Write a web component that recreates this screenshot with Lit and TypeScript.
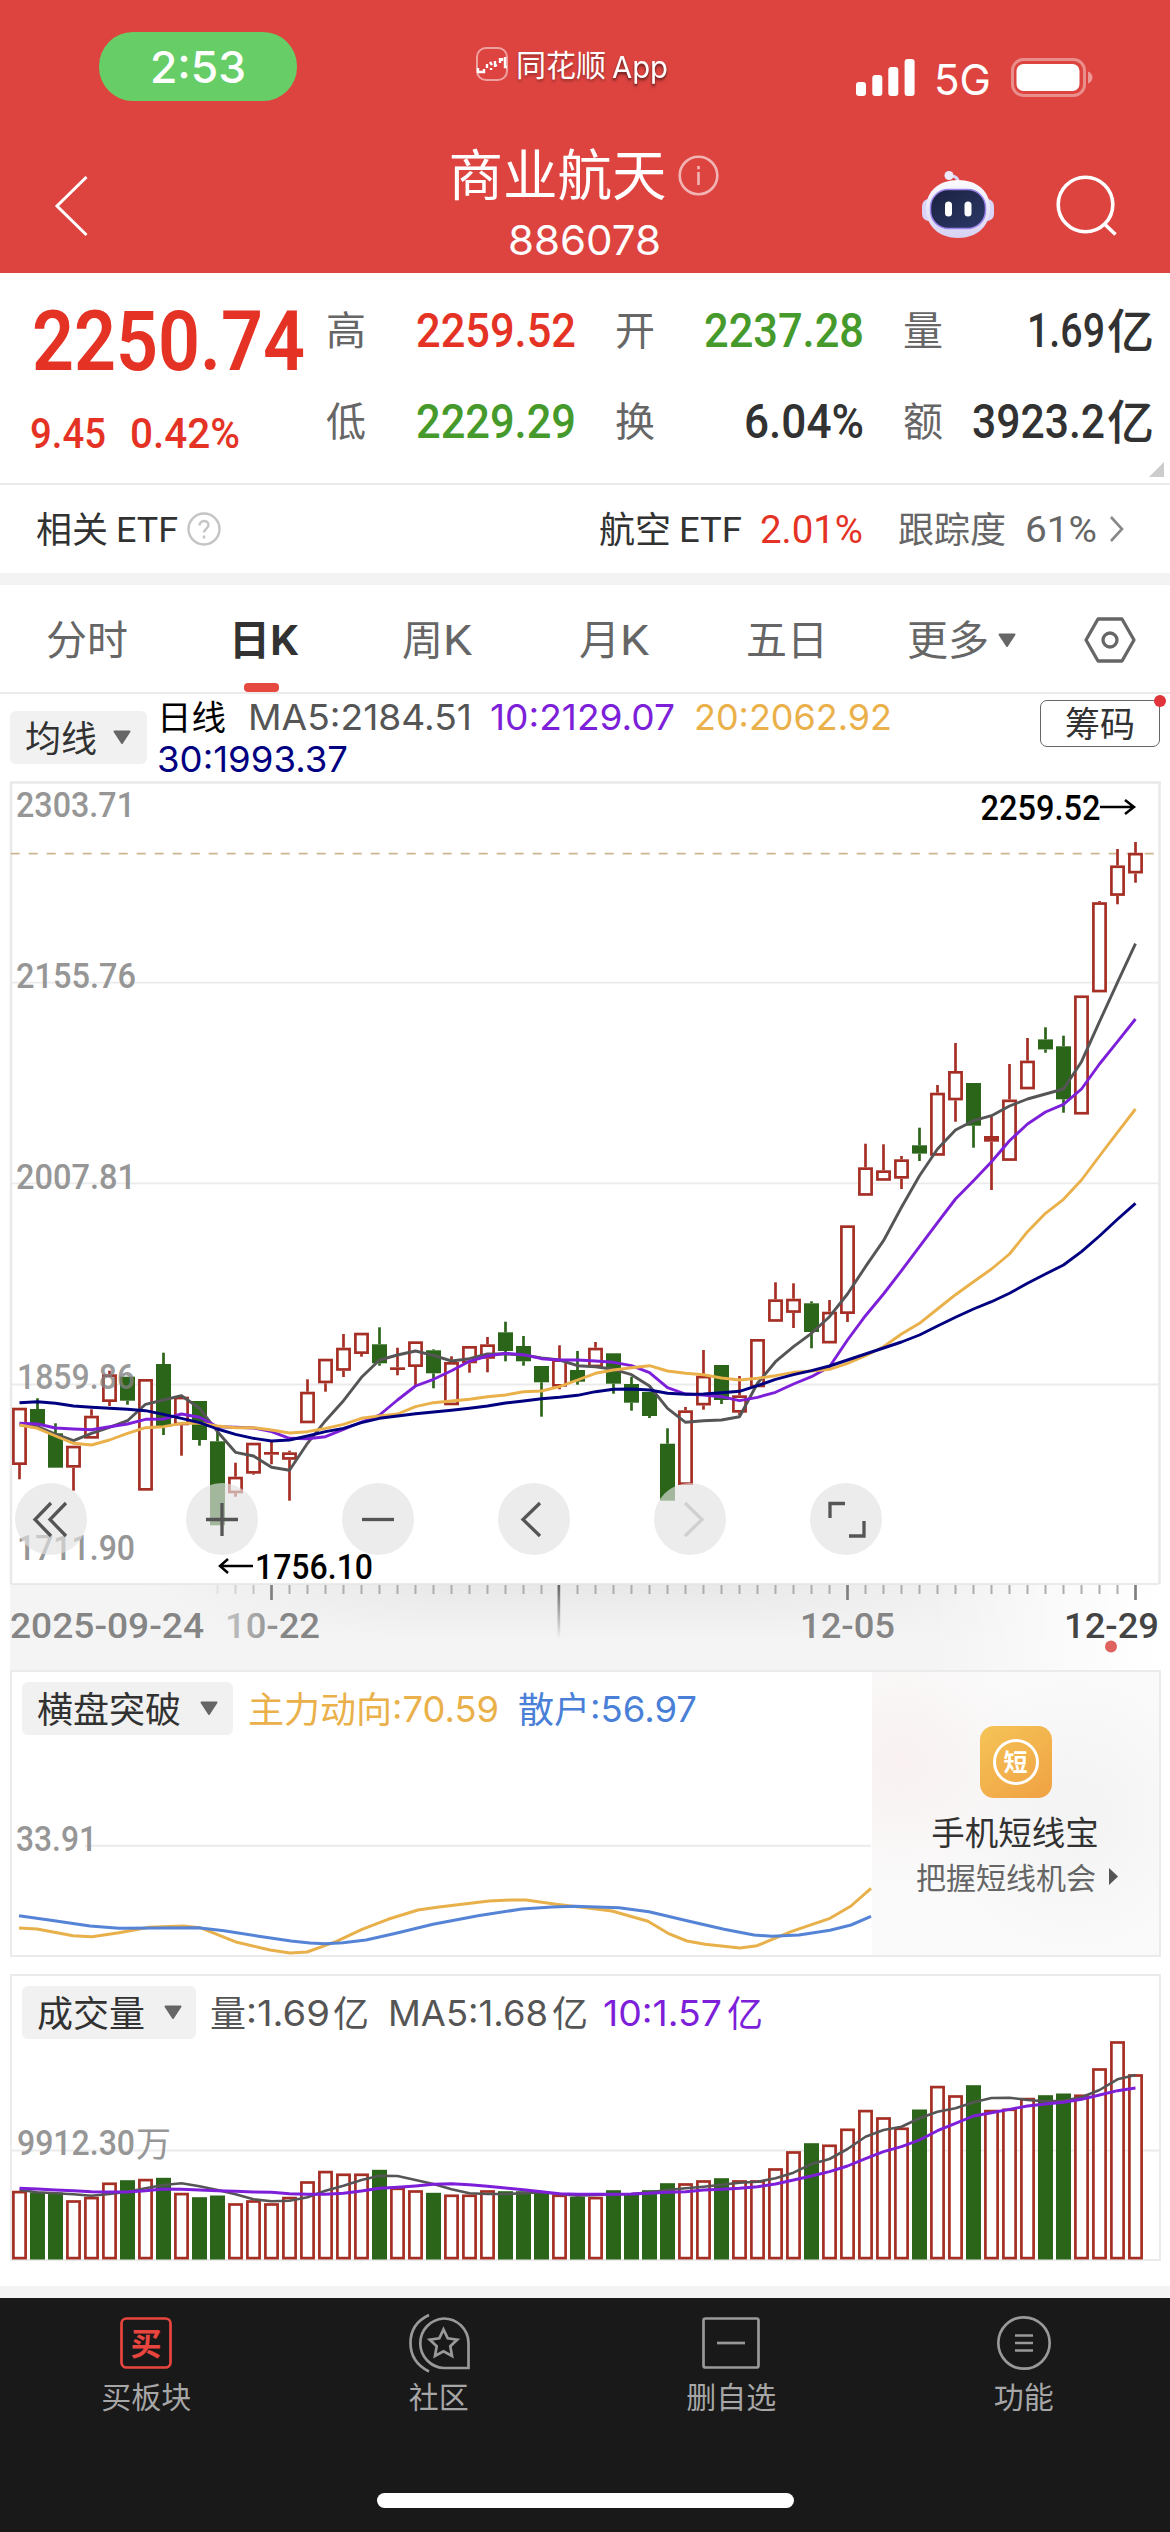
import { LitElement, html, svg, css, nothing } from "lit";
import { customElement } from "lit/decorators.js";

type Candle = [kind: "r" | "g" | "f", open: number, close: number, high?: number, low?: number];

const STEP = 18;
const FIRST = 19.5;
const cx = (i: number) => FIRST + i * STEP;

/* kind (r hollow, g filled, f filled red), body top, body bottom, wick top, wick bottom */
const CANDLES: Candle[] = [
  ["r", 627.7, 685, 627.7, 699.3], ["g", 629, 645.7, 618.3, 646.7], ["g", 653.3, 687.7, 643.3, 687.7],
  ["r", 665.7, 687.7, 665.7, 710.7], ["r", 635.7, 658.7, 629.3], ["r", 594.3, 622, 590.7, 626],
  ["g", 596.7, 620.7, 596.7, 624.7], ["r", 599, 710.7], ["g", 584, 646.7, 572.7, 655],
  ["r", 616.7, 645.3, 615, 675.7], ["g", 621, 660, 621, 665.7], ["g", 661.3, 745.3, 651.7],
  ["r", 696.7, 713.3, 682.7, 716.7], ["r", 662.7, 693.7, 662.7, 694.7], ["f", 672, 674.7, 661.7, 684.3],
  ["r", 672.3, 679.8, 670.7, 720.7], ["r", 611.7, 643.3, 599.3], ["r", 578.7, 603.3, 578.7, 611.7],
  ["r", 567.7, 590.8, 554, 597], ["r", 552.7, 574, 552.7, 576.7], ["g", 564.3, 583.3, 547.3, 585.7],
  ["f", 587.3, 590, 567.7, 595.3], ["r", 561.3, 587, 561.3, 606], ["g", 570.3, 593.3, 569.3, 608.3],
  ["r", 582, 625.3, 576.3], ["r", 566, 583.3, 566, 592.7], ["r", 564.3, 578.8, 557, 592.3],
  ["g", 552.3, 571, 541.7, 581.3], ["g", 566, 581.3, 556, 585.7], ["g", 586, 602.3, 586, 636.7],
  ["r", 579.3, 606.7, 565.3, 609.3], ["g", 590, 601.7, 571, 604.7], ["r", 567.7, 587.3, 562],
  ["g", 573.3, 603.7, 573.3, 613.7], ["g", 604, 622.7, 596.7, 630.7], ["g", 612, 636, 612, 638],
  ["g", 663.7, 720.7, 648.3], ["r", 630.3, 705, 627], ["r", 595.7, 625.5, 570, 629.7],
  ["g", 585, 620, 585, 624], ["r", 615.3, 632.7, 596, 635], ["r", 559, 607.3],
  ["r", 519.3, 541.8, 502.3], ["r", 518.7, 532.9, 503.3, 548], ["g", 523.3, 552, 521.3, 568.3],
  ["r", 531.7, 563.5, 520], ["r", 445.3, 534, 445.3, 542], ["r", 387.3, 415.8, 363.7],
  ["r", 390.3, 400.8, 364.3], ["r", 379.3, 398.7, 376, 409], ["g", 365.3, 373.6, 347.7, 381],
  ["r", 312.7, 375.8, 305], ["r", 291, 320.4, 263, 341.7], ["g", 303, 345.7, 303, 367.7],
  ["f", 356, 361.7, 336.7, 410], ["r", 319.5, 380.9, 284], ["r", 280.6, 309.4, 258],
  ["g", 259.4, 269.4, 247.3, 272.7], ["g", 266.3, 319.3, 255.7, 332.7], ["r", 215.4, 334.6],
  ["r", 122.2, 212.4, 121], ["r", 85.4, 115.9, 69, 124.3], ["r", 72.8, 93.5, 62, 102.7],
];

const MA5 = [644.3, 646.7, 654, 660.7, 653.3, 647.3, 640.7, 624.3, 620, 615.7, 628.3, 651.7, 672.3, 676, 687.3, 690.3, 663.3, 640.7, 620.7, 597.3, 580, 575, 571, 575.3, 581, 578.7, 574, 574, 575, 578, 580, 585.7, 586.7, 589.3, 594.7, 606, 628.3, 642.3, 640.7, 640, 636.7, 603.3, 581.7, 566.7, 553.3, 536.7, 514, 486.7, 460.7, 427.3, 395.7, 369, 350, 340.7, 335.7, 326, 319, 314, 309, 281.7, 241.7, 202.3, 163.7];
const MA10 = [643.3, 644, 648, 649, 649.7, 646.7, 644, 639.3, 639, 634, 637.3, 646.7, 647.3, 648, 651.7, 658.3, 658.7, 656.7, 649.3, 642, 635, 620, 606, 599.3, 590.7, 581.3, 576, 573.3, 574.7, 578.7, 580, 580, 581, 582.3, 585.7, 592.7, 607.7, 614, 615, 616.7, 620.7, 617.3, 612.3, 604, 596.7, 586.7, 560, 535.7, 514, 490.7, 466.7, 442.7, 419, 400.7, 381.7, 360.7, 344, 332, 324.3, 309, 284, 261.7, 239];
const MA20 = [645, 648.3, 656, 663.3, 665, 660, 653.3, 647.7, 646.7, 643.3, 643.3, 646, 647.7, 647.7, 650, 653, 651.7, 648.3, 644.3, 638.3, 636, 634, 626.7, 622.7, 621, 619.3, 616.7, 615, 611.7, 611, 606.7, 600, 593.3, 590, 587.7, 585.7, 591, 593.3, 594.7, 598, 600, 598.3, 595.7, 592.3, 591, 589.3, 583.3, 575.7, 566.7, 554, 543.3, 529, 514.7, 501.7, 489, 474, 451.7, 433.3, 419.3, 400, 376, 352.3, 329];
const MA30 = [622.7, 621.7, 623.3, 626, 627.3, 628.3, 629.3, 630.7, 634.3, 638.3, 642.7, 649, 654.3, 658.3, 661, 660, 656, 651.7, 648.3, 642.7, 638.3, 636, 633.7, 632, 630.3, 628.3, 626, 623, 621, 618.7, 617.3, 615.3, 611.7, 609.3, 609, 610, 613.3, 614.3, 614, 612.7, 611.3, 605.7, 599.3, 594.7, 590.7, 586, 580, 574, 568, 562, 555, 546, 537.3, 529, 521.7, 513.3, 503.3, 494, 485, 471.7, 456, 439.3, 423.3];

/* bar heights of the volume pane */
const VOLUME = [68.7, 67, 67, 59.3, 62.7, 77, 79.3, 80.7, 81.7, 66.7, 62.3, 64, 56.3, 59.3, 56.3, 62.7, 78.3, 88.7, 86, 86, 89.7, 72, 69.3, 66.7, 65, 65, 69.3, 68.3, 68.3, 67, 65, 62.7, 62.7, 69.3, 65, 69.3, 76.3, 76.3, 79.3, 81.3, 79.3, 79.3, 91.3, 108.3, 116.3, 115, 131, 149.7, 142.3, 132, 150, 173.7, 164.3, 174.3, 149.7, 151, 161.7, 164.3, 166, 165, 191.3, 218.3, 185.3];
const VOLUME_GREEN = new Set([1, 2, 6, 8, 10, 11, 20, 23, 27, 28, 29, 31, 33, 34, 35, 36, 39, 44, 50, 53, 57, 58]);
/* volume averages, in thirds of a pixel */
const VMA5 = [690, 697, 700, 703, 707, 702, 695, 685, 675, 670, 679, 690, 703, 718, 724, 722, 712, 692, 677, 660, 647, 648, 660, 672, 688, 700, 702, 702, 700, 697, 702, 707, 705, 703, 702, 697, 690, 685, 680, 674, 668, 665, 655, 638, 612, 597, 567, 530, 510, 500, 475, 455, 445, 427, 414, 413, 420, 424, 422, 412, 390, 358, 345];
const VMA10 = [685, 687, 690, 692, 695, 696, 696, 692, 687, 688, 690, 692, 694, 696, 697, 701, 703, 703, 700, 693, 685, 682, 678, 673, 671, 674, 679, 684, 689, 695, 701, 703, 703, 703, 702, 700, 697, 695, 690, 688, 685, 680, 672, 660, 648, 635, 618, 596, 575, 560, 540, 512, 490, 468, 458, 448, 438, 432, 427, 418, 405, 392, 384];

const MAIN_FORCE = "19,258 37,259 73,265.7 92,266.7 119,262.7 149,257.3 183,256 200,257.7 237,272.3 270,280 290,283 307,282 336,271.7 362,259.3 388,249.3 418,240 437,237.3 489,231 511,230 526,230 556,234.3 586,237.7 612,241 648,251.3 668,263.3 687,271 705,274.3 740,278 757,275.7 791,261.7 830,248.3 851,236 871,218.3";
const RETAIL = "19,245.7 56,251 90,256 119,258.3 198,257.7 224,260.7 257,266 291,271 310,273 325,273.7 343,272.7 366,270 396,263.3 433,254.3 478,245.7 522,239 552,237 575,236.3 619,237.7 649,241.7 687,250.7 724,259.3 754,265 772,266.3 799,265 830,260.3 851,255 871,246.3";

const points = (ys: number[], f: (v: number) => number = (v) => v) =>
  ys.map((y, i) => `${cx(i)},${f(y).toFixed(1)}`).join(" ");

/* Text stretched to an exact width; the box is as high as its capitals. */
const CAP: Record<string, number> = { din: 0.711, sf: 0.727 };
const fit = (text: string, w: number, cap: number, cls = "", face: "din" | "sf" = "din") => html`<svg
  class="fit ${face} ${cls}" width=${w} height=${cap} viewBox="0 0 ${w} ${cap}">
  <text x="0" y=${cap} font-size=${(cap / CAP[face]).toFixed(2)} textLength=${w} lengthAdjust="spacingAndGlyphs">${text}</text>
</svg>`;

const label = (text: string, x: number, y: number, w: number, cls: string, cap = 25) => svg`<text
  class=${cls} x=${x} y=${y} font-size=${(cap / 0.711).toFixed(2)} textLength=${w} lengthAdjust="spacingAndGlyphs">${text}</text>`;

const caret = html`<svg class="caret" width="20" height="15" viewBox="0 0 20 15"><path d="M2.5 1.5h15L10 13z" fill="#666" stroke="#666" stroke-width="2" stroke-linejoin="round"/></svg>`;

@customElement("status-header")
class StatusHeader extends LitElement {
  static styles = css`
    :host { display: block; background: #dd4440; height: 273px; color: #fff;
      font-family: Inter, "Noto Sans CJK SC", sans-serif; }
    svg { display: block; overflow: visible; flex: none; }
    .fit text { fill: currentColor; font-family: Inter, sans-serif; }
    .status { display: flex; align-items: flex-start; height: 140px; padding-left: 99px; box-sizing: border-box; }
    .pill { width: 198px; height: 69px; margin-top: 32px; border-radius: 34px; background: #67ce67;
      display: flex; align-items: center; justify-content: center; }
    .pill svg { font-weight: 500; }
    .brand { display: flex; align-items: center; gap: 8px; margin: 47px 0 0 179px; height: 35px;
      font-size: 30px; line-height: 30px; text-shadow: 0 2px 3px rgba(0,0,0,.35); }
    .brand .name { display: block; width: 90px; margin-top: 0; white-space: nowrap; }
    .brand .app { margin: 4px 0 0 -2px; filter: drop-shadow(0 2px 1px rgba(0,0,0,.3)); }
    .signal { display: flex; align-items: center; margin: 58px 0 0 188px; height: 39px; }
    .signal .net { margin: 4px 20px 0 19px; }
    .nav { display: grid; grid-template-columns: 1fr auto 1fr; height: 133px; }
    .back { margin: 35px 0 0 54px; }
    .title { display: flex; flex-direction: column; align-items: center; }
    .name-row { display: flex; align-items: center; gap: 11px; height: 62px; font-size: 54.500px; line-height: 54px; margin: 4px 3px 0 0; font-weight: 400; }
    .code { margin-top: 19px; }
    .tools { display: flex; align-items: flex-start; justify-content: flex-end; gap: 61px; padding: 30px 53px 0 0; }
    .search { margin-top: 4px; }
  `;
  render() {
    return html`
      <div class="status">
        <div class="pill">${fit("2:53", 96, 32, "", "sf")}</div>
        <div class="brand">
          <svg width="32" height="35" viewBox="0 0 32 35">
            <rect x="1" y="1" width="30" height="32" rx="9" fill="none" stroke="#fff" stroke-opacity=".5" stroke-width="2"/>
            <path d="M2 21v4h6v-3M11 17v4M14 15l2 3M15 21v2M19 14v6M21 18l-2 1M24 11v5M26 11v3M29 10v10h2" fill="none" stroke="#fff" stroke-width="2.4"/>
          </svg>
          <span class="name">同花顺</span>
          ${fit("App", 56, 22, "app", "sf")}
        </div>
        <div class="signal">
          <svg width="59" height="39" viewBox="0 0 59 39" fill="#fff">
            <rect x="0" y="24" width="10" height="14" rx="3"/><rect x="16.3" y="17" width="10" height="21" rx="3"/>
            <rect x="32.3" y="9" width="10" height="29" rx="3"/><rect x="48.6" y="1" width="10" height="37" rx="3"/>
          </svg>
          ${fit("5G", 57, 31, "net", "sf")}
          <svg width="82" height="39" viewBox="0 0 82 39">
            <rect x="1.5" y="1.5" width="72" height="36" rx="11" fill="none" stroke="#fff" stroke-opacity=".4" stroke-width="3"/>
            <rect x="5.5" y="6" width="63" height="27" rx="7" fill="#fff"/>
            <path d="M77 13.5c3 1 4.500 3.500 4.500 6s-1.500 5-4.500 6z" fill="#fff" fill-opacity=".45"/>
          </svg>
        </div>
      </div>
      <div class="nav">
        <svg class="back" width="36" height="62" viewBox="0 0 36 62"><path d="M32.500 2L3 31l29.500 29" fill="none" stroke="#fff" stroke-width="3"/></svg>
        <div class="title">
          <div class="name-row"><span>商业航天</span>
            <svg width="41" height="41" viewBox="0 0 41 41" fill="none" stroke="#fff" stroke-opacity=".6" stroke-width="2.600">
              <circle cx="20.500" cy="20.500" r="18.800"/><path d="M20.500 17v13M20.500 11v3.200"/></svg>
          </div>
          <div class="code">${fit("886078", 153, 30, "", "sf")}</div>
        </div>
        <div class="tools">
          <svg width="74" height="70" viewBox="0 0 74 70">
            <defs><linearGradient id="hd" x1="0" y1="0" x2="0" y2="1"><stop offset="0" stop-color="#fbfbff"/><stop offset="1" stop-color="#d6d2f2"/></linearGradient>
            <linearGradient id="sc" x1="0" y1="0" x2="1" y2="1"><stop offset="0" stop-color="#1b2140"/><stop offset="1" stop-color="#2c3968"/></linearGradient></defs>
            <path d="M37 12c0-4-2-6-7-6" fill="none" stroke="#d9d6f6" stroke-width="3"/><circle cx="28" cy="5.500" r="4.500" fill="#ece9ff"/>
            <rect x="1" y="29" width="14" height="22" rx="7" fill="#d9d4f8"/><rect x="59" y="29" width="14" height="22" rx="7" fill="#d9d4f8"/>
            <path d="M37 10c19 0 32 11 32 28.500S56 68 37 68 5 56 5 38.500 18 10 37 10z" fill="url(#hd)"/>
            <rect x="9.500" y="19.500" width="55" height="39" rx="18" fill="url(#sc)" stroke="#9a83ea" stroke-width="1.500"/>
            <rect x="24" y="31.500" width="7" height="15" rx="3.500" fill="#fff"/><rect x="43.500" y="31.500" width="7" height="15" rx="3.500" fill="#fff"/>
          </svg>
          <svg class="search" width="61" height="62" viewBox="0 0 61 62" fill="none" stroke="#fff" stroke-width="3.600"><circle cx="29.500" cy="30.500" r="27.300"/><path d="M48.500 50l11 10.500"/></svg>
        </div>
      </div>`;
  }
}

@customElement("app-root")
class AppRoot extends LitElement {
  static styles = css`
    :host { display: block; width: 1170px; height: 2532px; background: #fff; overflow: hidden;
      font-family: "Noto Sans CJK SC", sans-serif; color: #323232; }
    svg { display: block; flex: none; overflow: visible; }
    .fit text { fill: currentColor; }
    .din { font-family: Roboto, sans-serif; font-weight: 500; }
    .sf { font-family: Inter, sans-serif; font-weight: 400; }
    .reg { font-weight: 400; }
    .bold { font-weight: 600; }
    .red { color: #e43325; }
    .green { color: #459a2b; }
    .grey { color: #666; }
    .cjk { display: block; line-height: 1; margin-top: -.11em; white-space: nowrap; }

    .quote { height: 210px; display: flex; border-bottom: 2px solid #ebebeb; box-sizing: content-box; position: relative; }
    .last { width: 294px; flex: none; padding: 38px 0 0 32px; }
    .delta { display: flex; gap: 24px; margin: 48px 0 0 -2px; }
    .stats { display: grid; grid-template-columns: 250px 249px 251px; grid-template-rows: 38px 38px; row-gap: 53px;
      column-gap: 39px; padding: 38px 0 0; height: 170px; box-sizing: border-box; align-content: start; }
    .cell { display: flex; align-items: center; justify-content: space-between; font-size: 40px; height: 38px; }
    .cell .val { display: flex; align-items: center; }
    .cell .yi { font-size: 47px; font-weight: 500; margin-left: 2px; }
    .corner { position: absolute; right: 6px; bottom: 6px; }

    .etf { display: flex; align-items: center; height: 88px; padding: 0 46px 0 36px; font-size: 36px; }
    .etf .q { margin-left: 9px; }
    .etf .push { margin-left: auto; }
    .band { height: 12px; background: #f3f3f3; }

    .tabs { display: flex; height: 107px; border-bottom: 2px solid #ebebeb; padding-left: 46px; font-size: 41px; color: #666; align-items: stretch; }
    .tab { display: flex; flex-direction: column; align-items: center; }
    .tab .row { display: flex; align-items: center; height: 38px; margin-top: 36px; }
    .tab .mark { width: 35px; height: 9px; border-radius: 4px; background: #e5493f; margin: 25px 0 0 -4px; }
    .active { color: #323232; font-weight: 700; }

    .legend { display: flex; height: 86px; padding: 0 10px; }
    .select { display: flex; align-items: center; background: #f1f1f1; border-radius: 6px; font-size: 36px; height: 53px; box-sizing: border-box; flex: none; }
    .legend .select { width: 137px; margin-top: 17px; padding-left: 15px; }
    .legend .caret { margin-left: 15px; }
    .ma { flex: 1; margin-left: 10px; padding-top: 6px; }
    .ma .line { display: flex; align-items: center; height: 34px; font-size: 34.500px; color: #000; }
    .ma .line + .line { margin-top: 8px; }
    .c5 { color: #555; } .c10 { color: #7d1fd9; } .c20 { color: #eab04a; } .c30 { color: #000080; }
    .chips { position: relative; width: 118px; height: 45px; border: 1.500px solid #666; border-radius: 7px; margin-top: 6px;
      display: flex; align-items: center; justify-content: center; font-size: 35px; }
    .dot { position: absolute; right: -7px; top: -6px; width: 12px; height: 12px; border-radius: 50%; background: #e0333a; }

    .kline { position: relative; height: 804px; }
    .axis-label { fill: #969696; font-family: Roboto, sans-serif; font-weight: 500; }
    .over { fill: #808080; fill-opacity: .78; }
    .peak { fill: #000; font-family: Roboto, sans-serif; font-weight: 500; }
    .date { fill: #858585; font-family: Roboto, sans-serif; font-weight: 500; }
    .now { fill: #444; }
    .tools { position: absolute; left: 15px; top: 703px; display: flex; }
    .tool { width: 72px; height: 72px; border-radius: 50%; background: rgba(226,226,226,.66); margin-right: 84px; }
    .tool:first-child { margin-right: 99px; }

    .axis { margin-left: 10px; width: 1150px; height: 86px;
      background: linear-gradient(90deg, transparent 80%, #fff 100%), linear-gradient(90deg, #f4f4f4 12%, rgba(244,244,244,0) 38%, rgba(244,244,244,0) 62%, #f4f4f4 92%), linear-gradient(180deg, #e8e8e8, #f4f4f4 65%); }

    .pane { position: relative; box-sizing: border-box; margin: 0 9px 0 10px; border: 2.500px solid #ebebeb; background: #fff; }
    .breakout { height: 287px; }
    .volume { height: 287px; margin-top: 17px; }
    .plot { position: absolute; left: -12px; top: -2px; }
    .head { position: relative; display: flex; align-items: center; margin: 10px 0 0 10px; height: 53px; }
    .head .select { padding-left: 15px; }
    .head .caret { margin-left: 18px; }
    .head .txt { font-size: 36px; }
    .promo { position: absolute; right: 0; top: 0; bottom: 0; width: 287px; display: flex; flex-direction: column; align-items: center;
      background: radial-gradient(circle at 10% 32%, #f9f1f1, transparent 40%), radial-gradient(circle at 70% 50%, #f3f3f3, transparent 60%), #fafafa; }
    .coin { width: 72px; height: 72px; border-radius: 14px; margin-top: 54px; background: linear-gradient(145deg, #f5c457, #f0a143);
      display: flex; align-items: center; justify-content: center; margin-right: 0; }
    .ring { width: 40px; height: 40px; border: 3px solid #fff; border-radius: 50%; color: #fff; font-weight: 700; font-size: 24px; line-height: 38px; text-align: center; }
    .promo .t1 { font-size: 33.500px; line-height: 34px; margin: 16px 1px 0 0; color: #323232; }
    .promo .t2 { display: flex; align-items: center; gap: 12px; font-size: 30px; line-height: 30px; color: #666; margin: 13px 0 0 4px; }

    .bottom-band { height: 12px; margin-top: 25px; background: #f3f3f3; }
    .tabbar { height: 234px; background: #191919; color: #a6a6a6; display: flex; flex-direction: column; justify-content: space-between; align-items: center; }
    .items { display: grid; grid-template-columns: repeat(4, 1fr); width: 1170px; }
    .item { display: flex; flex-direction: column; align-items: center; font-size: 30px; line-height: 30px; }
    .item svg { margin: 14px 0 6px; }
    .glyph { font-size: 31px; font-weight: 700; fill: #e8453f; font-family: "Noto Sans CJK SC", sans-serif; }
    .home { width: 417px; height: 15px; border-radius: 8px; background: #fff; margin-bottom: 24px; }
  `;

  private cell(name: string, text: string, w: number, cls = "", yi = false) {
    return html`<div class="cell"><span class="cjk grey">${name}</span>
      <span class="val ${cls}">${fit(text, w, 34)}${yi ? html`<span class="cjk yi">亿</span>` : nothing}</span></div>`;
  }

  private candle([kind, top, bottom, high = top, low = bottom]: Candle, i: number) {
    const x = cx(i);
    const stroke = kind === "g" ? "#2b6519" : "#a52f25";
    const h = Math.max(bottom - top, 2.7);
    return svg`
      ${high < top ? svg`<path d="M${x} ${high}V${top}" stroke=${stroke} stroke-width="2.700"/>` : nothing}
      ${low > bottom ? svg`<path d="M${x} ${bottom}V${low}" stroke=${stroke} stroke-width="2.700"/>` : nothing}
      ${kind === "r"
        ? svg`<rect x=${x - 6.1} y=${top + 1.35} width="12.200" height=${h - 2.7} fill="#fff" stroke=${stroke} stroke-width="2.700"/>`
        : svg`<rect x=${x - 7.5} y=${top} width="15" height=${h} fill=${stroke}/>`}`;
  }

  private line(pts: string, color: string, w = 2.9) {
    return svg`<polyline points=${pts} fill="none" stroke=${color} stroke-width=${w} stroke-linejoin="round"/>`;
  }

  private renderKline() {
    return html`<div class="kline">
      <svg width="1170" height="804" viewBox="0 0 1170 804">
        <path d="M10 2.500H1161M11 2.500V804M1159.500 2.500V804" fill="none" stroke="#e9e9e9" stroke-width="2.500"/>
        <path d="M10 202.700H1159M10 403.300H1159M10 604.500H1159" stroke="#ebebeb" stroke-width="1.800"/>
        <path d="M11 804H1159" stroke="#e4e4e4" stroke-width="1.500"/>
        <path d="M10.700 73.700H1156" stroke="#cdb591" stroke-width="1.800" stroke-dasharray="9 9"/>
        ${label("2303.71", 16, 37, 119, "axis-label")}
        ${label("2155.76", 16, 207.5, 120, "axis-label")}
        ${label("2007.81", 16, 408.5, 120, "axis-label")}
        ${CANDLES.map((c, i) => this.candle(c, i))}
        ${label("1859.86", 17, 609.3, 118, "axis-label over")}
        ${label("1711.90", 17, 780, 118, "axis-label")}
        ${this.line(points(MA5), "#555")}
        ${this.line(points(MA10), "#7d1fd9")}
        ${this.line(points(MA20), "#eab04a")}
        ${this.line(points(MA30), "#000080")}
        ${label("2259.52", 980.5, 40, 120, "peak")}
        <path d="M1100 27H1134M1125 20L1134 27L1125 34" fill="none" stroke="#000" stroke-width="2.500"/>
        ${label("1756.10", 255, 799, 118, "peak")}
        <path d="M253 786H220M228 779L220 786L228 793" fill="none" stroke="#000" stroke-width="2.500"/>
      </svg>
      <div class="tools">
        ${["M36 20L20 36.500L36 53M51 20L35 36.500L51 53", "M20 36.500H52M36 20V53", "M20 36.500H52", "M42 20L25 36.500L42 53", "M31 20L48 36.500L31 53", "M20 35V20.500H35M54 38V53H39"].map(
          (d, i) => html`<div class="tool"><svg width="72" height="72" viewBox="0 0 72 72"><path d=${d} fill="none" stroke=${i === 4 ? "#d0d0d0" : "#555"} stroke-width="3.300"/></svg></div>`)}
      </div>
    </div>`;
  }

  private renderAxis() {
    const ticks = Array.from({ length: 52 }, (_, k) => k + 11).filter((i) => ![14, 30, 46, 62].includes(i));
    return html`<div class="axis"><svg width="1150" height="86" viewBox="10 0 1150 86">
      <defs>
        <linearGradient id="needle" x1="0" y1="0" x2="0" y2="1"><stop offset="0" stop-color="#666"/><stop offset="1" stop-color="#666" stop-opacity="0"/></linearGradient>
        <linearGradient id="fade" gradientUnits="userSpaceOnUse" x1="225" y1="0" x2="285" y2="0"><stop offset="0" stop-color="#c4c4c4"/><stop offset="1" stop-color="#858585"/></linearGradient>
      </defs>
      ${ticks.map((i) => svg`<path d="M${cx(i)} 1V10" stroke="#adadad" stroke-width="2" stroke-opacity=${i < 14 ? (i - 10) * 0.22 : 1}/>`)}
      ${[14, 46, 62].map((i) => svg`<path d="M${cx(i)} 1V16" stroke="#808080" stroke-width="2.700"/>`)}
      <rect x="557.500" y="1" width="2.700" height="54" fill="url(#needle)"/>
      ${label("2025-09-24", 10, 54, 194, "date")}
      <g style="fill:url(#fade)"><text x="225" y="53.500" font-size="35.160" textLength="95" lengthAdjust="spacingAndGlyphs" font-family="Roboto" font-weight="500">10-22</text></g>
      ${label("12-05", 800, 53.500, 95, "date")}
      ${label("12-29", 1064, 53.500, 95, "date now")}
      <circle cx="1111" cy="62.500" r="6" fill="#e0625e"/>
    </svg></div>`;
  }

  private renderBreakout() {
    return html`<div class="pane breakout">
      <svg class="plot" width="1170" height="287" viewBox="0 0 1170 287">
        <path d="M85 175.700H871" stroke="#ebebeb" stroke-width="2"/>
        ${label("33.91", 16, 181, 81, "axis-label")}
        ${this.line(MAIN_FORCE, "#e8b04a", 3)}
        ${this.line(RETAIL, "#5583d6", 3)}
      </svg>
      <div class="head">
        <div class="select" style="width:211px"><span class="cjk">横盘突破</span>${caret}</div>
        <span class="cjk txt" style="margin-left:15px;color:#eab04a">主力动向</span>
        ${fit(":70.59", 107, 26, "sf c20", "sf")}
        <span class="cjk txt" style="margin-left:19px;color:#4a7fd8">散户</span>
        <span style="color:#4a7fd8">${fit(":56.97", 107, 26, "", "sf")}</span>
      </div>
      <div class="promo">
        <div class="coin"><div class="ring">短</div></div>
        <div class="t1">手机短线宝</div>
        <div class="t2"><span>把握短线机会</span><svg width="11" height="17" viewBox="0 0 11 17"><path d="M1 0l9 8.500L1 17z" fill="#555"/></svg></div>
      </div>
    </div>`;
  }

  private renderVolume() {
    const y = (v: number) => v / 3 - 14;
    return html`<div class="pane volume">
      <svg class="plot" width="1170" height="287" viewBox="0 0 1170 287">
        <path d="M12 176.500H1159" stroke="#ebebeb" stroke-width="1.800"/>
        ${label("9912.30", 17, 181, 118, "axis-label")}
        <text x="136" y="183" font-size="35" fill="#969696">万</text>
        ${VOLUME.map((h, i) => VOLUME_GREEN.has(i)
          ? svg`<rect x=${cx(i) - 7.5} y=${285.5 - h} width="15" height=${h} fill="#2b6519"/>`
          : svg`<rect x=${cx(i) - 6.1} y=${286.8 - h} width="12.200" height=${h - 2.7} fill="#fff" stroke="#a52f25" stroke-width="2.700"/>`)}
        ${this.line(points(VMA5, y), "#555", 2.6)}
        ${this.line(points(VMA10, y), "#7d1fd9", 2.9)}
      </svg>
      <div class="head">
        <div class="select" style="width:174px"><span class="cjk">成交量</span>${caret}</div>
        <span class="cjk txt c5" style="margin-left:14px">量</span>
        ${fit(":1.69", 84, 26, "c5", "sf")}<span class="cjk txt c5" style="margin-left:3px">亿</span>
        <span style="margin-left:19px">${fit("MA5:1.68", 160, 26, "c5", "sf")}</span><span class="cjk txt c5" style="margin-left:4px">亿</span>
        <span style="margin-left:15px">${fit("10:1.57", 119, 26, "c10", "sf")}</span><span class="cjk txt c10" style="margin-left:5px">亿</span>
      </div>
    </div>`;
  }

  render() {
    return html`
      <status-header></status-header>
      <div class="quote">
        <div class="last red">
          ${fit("2250.74", 273, 59, "bold")}
          <div class="delta">${fit("9.45", 76, 30)}${fit("0.42%", 110, 30)}</div>
        </div>
        <div class="stats">
          ${this.cell("高", "2259.52", 160, "red")}
          ${this.cell("开", "2237.28", 160, "green")}
          ${this.cell("量", "1.69", 78, "", true)}
          ${this.cell("低", "2229.29", 160, "green")}
          ${this.cell("换", "6.04%", 120)}
          ${this.cell("额", "3923.2", 133, "", true)}
        </div>
        <svg class="corner" width="15" height="15" viewBox="0 0 15 15"><path d="M15 0V15H0z" fill="#ccc"/></svg>
      </div>
      <div class="etf">
        <span class="cjk">相关</span><span style="margin-left:8px">${fit("ETF", 62, 25, "reg")}</span>
        <svg class="q" width="34" height="34" viewBox="0 0 34 34" fill="none" stroke="#c4c4c4" stroke-width="2.400"><circle cx="17" cy="17" r="15.500"/><path d="M12.500 13.500c0-6 9-6 9-.5 0 3.800-4.500 3.700-4.500 7.500M17 23.500v3"/></svg>
        <span class="cjk push">航空</span><span style="margin-left:8px">${fit("ETF", 63, 25, "reg")}</span>
        <span style="margin-left:18px">${fit("2.01%", 103, 28, "red reg")}</span>
        <span class="cjk grey" style="margin-left:35px">跟踪度</span>
        <span style="margin-left:19px">${fit("61%", 72, 26, "grey reg")}</span>
        <svg style="margin-left:12px" width="15" height="26" viewBox="0 0 15 26"><path d="M2 1l11 12L2 25" fill="none" stroke="#888" stroke-width="2.600"/></svg>
      </div>
      <div class="band"></div>
      <div class="tabs">
        <div class="tab"><div class="row"><span class="cjk">分时</span></div></div>
        <div class="tab active" style="margin-left:101px"><div class="row"><span class="cjk">日</span>${fit("K", 28, 30, "bold")}</div><div class="mark"></div></div>
        <div class="tab" style="margin-left:104px"><div class="row"><span class="cjk">周</span>${fit("K", 29, 30, "reg")}</div></div>
        <div class="tab" style="margin-left:107px"><div class="row"><span class="cjk">月</span>${fit("K", 29, 30, "reg")}</div></div>
        <div class="tab" style="margin-left:97px"><div class="row"><span class="cjk">五日</span></div></div>
        <div class="tab" style="margin-left:79px"><div class="row"><span class="cjk">更多</span><span style="margin-left:8px">${caret}</span></div></div>
        <div class="tab" style="margin-left:67px"><div class="row"><svg width="52" height="46" viewBox="0 0 52 46" fill="none" stroke="#666" stroke-width="3.300"><path d="M14 2h24l12 21-12 21H14L2 23z" stroke-linejoin="round"/><circle cx="26" cy="23" r="7"/></svg></div></div>
      </div>
      <div class="legend">
        <div class="select"><span class="cjk">均线</span>${caret}</div>
        <div class="ma">
          <div class="line"><span class="cjk">日线</span>
            <span style="margin-left:22px">${fit("MA5:2184.51", 224, 26, "c5", "sf")}</span>
            <span style="margin-left:18px">${fit("10:2129.07", 185, 26, "c10", "sf")}</span>
            <span style="margin-left:19px">${fit("20:2062.92", 198, 26, "c20", "sf")}</span></div>
          <div class="line">${fit("30:1993.37", 191, 26, "c30", "sf")}</div>
        </div>
        <div class="chips"><span class="cjk">筹码</span><i class="dot"></i></div>
      </div>
      ${this.renderKline()}
      ${this.renderAxis()}
      ${this.renderBreakout()}
      ${this.renderVolume()}
      <div class="bottom-band"></div>
      <div class="tabbar">
        <div class="items">
          <div class="item"><svg width="60" height="62" viewBox="0 0 60 62"><rect x="5.500" y="6.500" width="49" height="49" rx="5" fill="none" stroke="#e8453f" stroke-width="2.700"/><text class="glyph" x="14.500" y="42.500">买</text></svg><span>买板块</span></div>
          <div class="item"><svg width="60" height="62" viewBox="0 0 60 62" fill="none" stroke="#999" stroke-width="2.700"><path d="M34.500 6.500a24.800 24.800 0 0 0 0 49.500H59.500V31A24.800 24.800 0 0 0 34.500 6.500z"/><path d="M20 3C6 9.500 1.500 21 1.500 31S6 52.500 20 59.500"/><path d="M34.500 17.500l4.200 8.800 9.600 1.300-7 6.700 1.700 9.600-8.500-4.600-8.500 4.600 1.700-9.600-7-6.700 9.600-1.300z"/></svg><span>社区</span></div>
          <div class="item"><svg width="60" height="62" viewBox="0 0 60 62" fill="none" stroke="#999" stroke-width="2.700"><rect x="2.500" y="6.500" width="55" height="49" rx="2"/><path d="M16 31H44"/></svg><span>删自选</span></div>
          <div class="item"><svg width="60" height="62" viewBox="0 0 60 62" fill="none" stroke="#999" stroke-width="2.700"><circle cx="30" cy="31" r="25.700"/><path d="M21 23.500H39M21 31H39M21 38.500H39"/></svg><span>功能</span></div>
        </div>
        <div class="home"></div>
      </div>`;
  }
}
